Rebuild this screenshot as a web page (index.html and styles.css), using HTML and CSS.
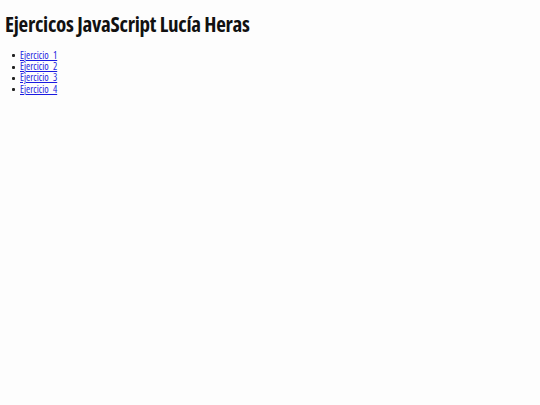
FILE: index.html
```html
<!DOCTYPE html>
<html lang="es">
<head>
<meta charset="utf-8">
<title>Ejercicos JavaScript Lucía Heras</title>
<link rel="stylesheet" href="styles.css">
</head>
<body>
<h1 class="title">Ejercicos JavaScript Lucía Heras</h1>
<ul class="list">
<li class="item"><a href="#">Ejercicio_1</a></li>
<li class="item"><a href="#">Ejercicio_2</a></li>
<li class="item"><a href="#">Ejercicio_3</a></li>
<li class="item"><a href="#">Ejercicio_4</a></li>
</ul>
</body>
</html>
```
FILE: styles.css
```css
html, body {
  background: #fdfdfd;
}
body {
  margin: 0 5px;
  font-family: "Open Sans", sans-serif;
  font-stretch: condensed;
  color: #111;
}
.title {
  font-size: 21px;
  font-weight: bold;
  letter-spacing: -0.25px;
  line-height: 28px;
  margin: 10px 0 11.5px;
}
.list {
  margin: 0;
  padding-left: 7px;
  list-style: none;
  font-size: 10px;
  line-height: 11.4px;
}
.item {
  display: flex;
  align-items: center;
  gap: 5px;
}
.item::before {
  content: "";
  width: 3px;
  height: 3px;
  border-radius: 1px;
  background: #222;
  margin-top: 1px;
}
.list a {
  color: #1a1ae0;
}
```
